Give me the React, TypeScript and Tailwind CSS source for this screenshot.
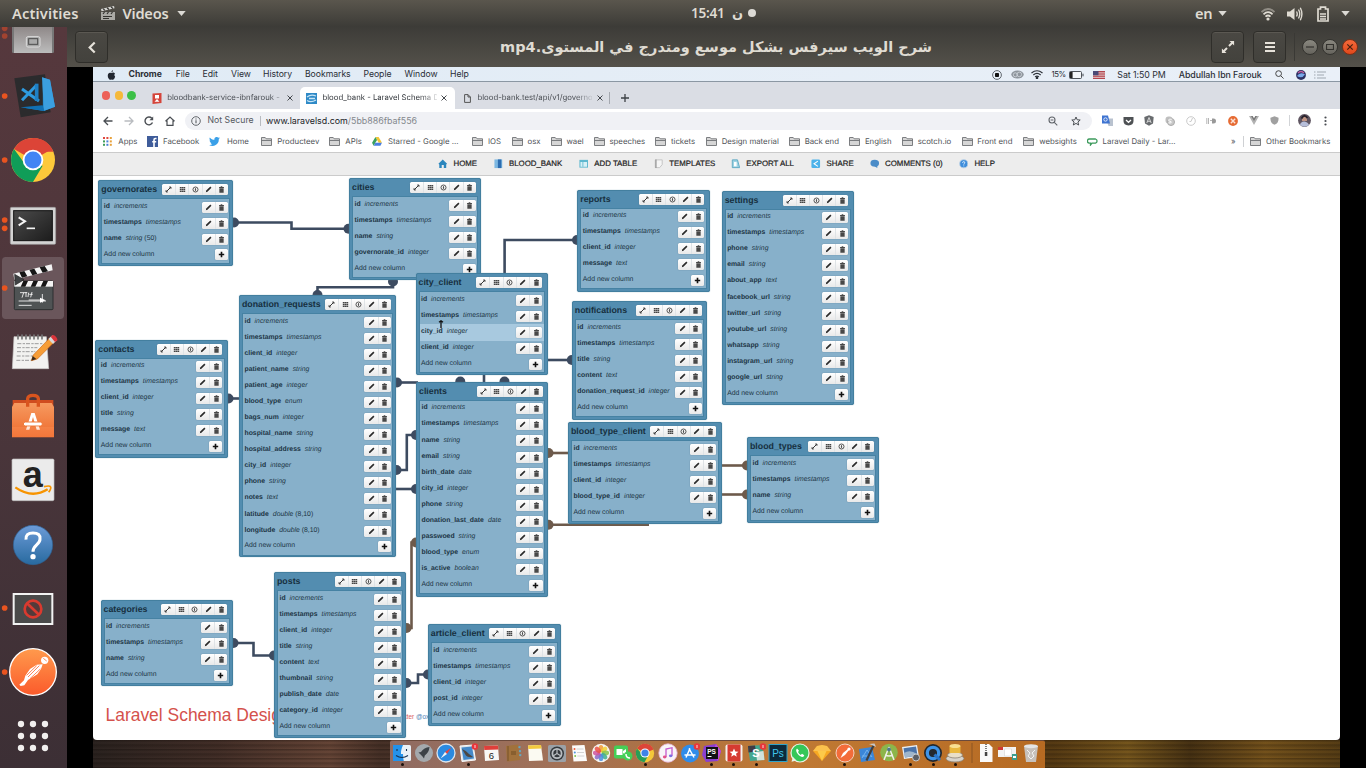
import React from "react";

type Column = [string, string];
type Table = { name: string; x: number; y: number; w: number; h: number; cols: Column[]; active?: number };

const ID: Column = ["id", "increments"];
const TS: Column = ["timestamps", "timestamps"];

const TABLES: Table[] = [
  { name: "governorates", x: 98.3, y: 180, w: 135.2, h: 86, cols: [ID, TS, ["name", "string (50)"]] },
  { name: "cities", x: 349, y: 178, w: 132.3, h: 102, cols: [ID, TS, ["name", "string"], ["governorate_id", "integer"]] },
  { name: "reports", x: 577.3, y: 189.5, w: 132.7, h: 102, cols: [ID, TS, ["client_id", "integer"], ["message", "text"]] },
  {
    name: "settings", x: 721.7, y: 190.5, w: 132.3, h: 214.5,
    cols: [ID, TS, ["phone", "string"], ["email", "string"], ["about_app", "text"], ["facebook_url", "string"], ["twitter_url", "string"], ["youtube_url", "string"], ["whatsapp", "string"], ["instagram_url", "string"], ["google_url", "string"]],
  },
  { name: "contacts", x: 95.3, y: 339.5, w: 132.7, h: 118.3, cols: [ID, TS, ["client_id", "integer"], ["title", "string"], ["message", "text"]] },
  {
    name: "donation_requests", x: 239, y: 295, w: 157.3, h: 262.2,
    cols: [ID, TS, ["client_id", "integer"], ["patient_name", "string"], ["patient_age", "integer"], ["blood_type", "enum"], ["bags_num", "integer"], ["hospital_name", "string"], ["hospital_address", "string"], ["city_id", "integer"], ["phone", "string"], ["notes", "text"], ["latitude", "double (8,10)"], ["longitude", "double (8,10)"]],
  },
  { name: "city_client", x: 415.5, y: 273.3, w: 132.2, h: 101.7, active: 2, cols: [ID, TS, ["city_id", "integer"], ["client_id", "integer"]] },
  {
    name: "clients", x: 416, y: 381.8, w: 132, h: 214.8,
    cols: [ID, TS, ["name", "string"], ["email", "string"], ["birth_date", "date"], ["city_id", "integer"], ["phone", "string"], ["donation_last_date", "date"], ["passwoed", "string"], ["blood_type", "enum"], ["is_active", "boolean"]],
  },
  { name: "notifications", x: 571.8, y: 301, w: 135.5, h: 118.5, cols: [ID, TS, ["title", "string"], ["content", "text"], ["donation_request_id", "integer"]] },
  { name: "blood_type_client", x: 568, y: 422.2, w: 153.7, h: 102.3, cols: [ID, TS, ["client_id", "integer"], ["blood_type_id", "integer"]] },
  { name: "blood_types", x: 747, y: 437.2, w: 132.3, h: 86.2, cols: [ID, TS, ["name", "string"]] },
  { name: "categories", x: 100.5, y: 600.3, w: 132.3, h: 85.7, cols: [ID, TS, ["name", "string"]] },
  {
    name: "posts", x: 274, y: 572.3, w: 132, h: 166.2,
    cols: [ID, TS, ["client_id", "integer"], ["title", "string"], ["content", "text"], ["thumbnail", "string"], ["publish_date", "date"], ["category_id", "integer"]],
  },
  { name: "article_client", x: 427.8, y: 624.2, w: 133, h: 101.8, cols: [ID, TS, ["client_id", "integer"], ["post_id", "integer"]] },
];

const NAVY = "#3d4b60";
const BROWN = "#6d5a4b";

const LINKS: { color: string; d: string; dots: [number, number][] }[] = [
  { color: NAVY, d: "M235 222.5H291.5V228.8H349", dots: [[234, 222.5], [348.5, 228.8]] },
  { color: NAVY, d: "M393 282V287.2H317.5V295", dots: [[393, 281.5], [317.5, 295]] },
  { color: NAVY, d: "M504.6 274V240H577", dots: [[577, 240]] },
  { color: NAVY, d: "M547 360H572", dots: [[571.8, 360]] },
  { color: NAVY, d: "M484 374V383", dots: [[460.3, 381.5], [504.5, 381.5]] },
  { color: NAVY, d: "M396 382.5H418", dots: [[397, 382.5]] },
  { color: NAVY, d: "M397 470H406.8V435H417", dots: [[396.500, 470], [416, 435]] },
  { color: NAVY, d: "M396 489H417", dots: [[416, 489]] },
  { color: NAVY, d: "M228 398.5H240", dots: [[228.5, 398.5]] },
  { color: NAVY, d: "M233 643H253.5V655.5H274", dots: [[233.500, 643], [274, 655.5]] },
  { color: NAVY, d: "M406 683H418V674.5H428", dots: [[406.5, 683], [428, 674.5]] },
  { color: BROWN, d: "M417 542.5H411.5V628H406", dots: [[416, 542.5], [406.5, 628]] },
  { color: BROWN, d: "M548 453H568", dots: [[548.5, 453]] },
  { color: BROWN, d: "M548 524.7H649", dots: [[548.5, 524.7]] },
  { color: BROWN, d: "M721 465.5H747", dots: [[747, 465.5]] },
  { color: BROWN, d: "M721 494.5H747", dots: [[747, 494.5]] },
];

const GLYPHS: Record<string, React.ReactNode> = {
  expand: <path d="M2.6 7.4 7.4 2.6M5.8 2.3h1.900v1.900M2.300 5.8v1.900h1.900" fill="none" stroke="#333" strokeWidth="1.1" />,
  grid: <path d="M2 2.900h6M2 5h6M2 7.1h6" stroke="#444" strokeWidth="1.4" strokeDasharray="1.8 .3" />,
  clock: <g fill="none" stroke="#444"><circle cx="5" cy="5" r="2.8" strokeWidth="1" /><path d="M5 3.4v3.2M4.3 5.2h1.4" strokeWidth=".9" /></g>,
  pencil: <path d="M2 8l.5-1.8L7 1.7 8.3 3 3.8 7.5z" fill="#2b2b2b" />,
  trash: <path d="M2.300 2.100h1.800v-.7h1.800v.7h1.800v1.200h-5.400zM2.600 3.700h4.800v5H2.600z" fill="#484848" />,
  plus: <path d="M5 2v6M2 5h6" stroke="#111" strokeWidth="1.8" />,
};

function Buttons({ names }: { names: string[] }) {
  return (
    <div className="flex h-[11px] shrink-0 overflow-hidden rounded-[1.5px] bg-gradient-to-b from-white to-[#e9e9e9] shadow-[0_0_1px_#45697f]">
      {names.map((n, i) => (
        <span key={n} className={"flex w-[13.2px] items-center justify-center " + (i ? "border-l border-[#dfe3e6]" : "")}>
          <svg viewBox="0 0 10 10" className="h-[9px] w-[9px]">{GLYPHS[n]}</svg>
        </span>
      ))}
    </div>
  );
}

function TableCard({ t }: { t: Table }) {
  return (
    <section
      className="absolute flex flex-col rounded-[2px] border border-[#437f9f] bg-[#538db0] px-[2px] pb-[2.5px] font-['Liberation_Sans',sans-serif] shadow-[0_0_1px_#5b8aa5] [text-rendering:geometricPrecision]"
      style={{ left: t.x - 93, top: t.y - 176, width: t.w, height: t.h }}
    >
      <header className="flex h-[17px] shrink-0 items-center justify-between pr-[2.500px]">
        <h2 className="text-[8.8px] leading-none font-bold text-[#17303f]">{t.name}</h2>
        <Buttons names={["expand", "grid", "clock", "pencil", "trash"]} />
      </header>
      <div className="flex grow flex-col border border-[#4682a3] bg-[#87b0ca] text-[6.85px] leading-none text-[#1c3444]">
        {t.cols.map(([n, ty], i) => (
          <div key={i} className={"flex h-[16.08px] shrink-0 items-center justify-between pr-[1.500px] pl-[1.5px] " + (i === t.active ? "bg-[#a8c9df]" : "")}>
            <span className="whitespace-nowrap">
              <b>{n}</b>
              <i className="ml-[4px]">{ty.split(" (")[0]}</i>
              {ty.includes("(") && <span> ({ty.split(" (")[1]}</span>}
            </span>
            <Buttons names={["pencil", "trash"]} />
          </div>
        ))}
        <div className="flex h-[15.5px] shrink-0 items-center justify-between pr-[1.500px] pl-[1.5px]">
          <span>Add new column</span>
          <Buttons names={["plus"]} />
        </div>
      </div>
    </section>
  );
}

/* ---------- launcher ---------- */

const LAUNCHER: { art: React.ReactNode; dots?: number[] }[] = [
  {
    dots: [82, 105],
    art: (
      <g>
        <rect x="36" y="20" width="126" height="136" rx="4" fill="#777" />
        <rect x="42" y="20" width="114" height="136" fill="url(#filesG)" />
        <rect x="79" y="107" width="41" height="31" rx="5" fill="#a5a5a5" stroke="#ddd" strokeWidth="3" />
        <rect x="86" y="113" width="27" height="17" fill="#aaa" stroke="#4d4d4d" strokeWidth="3" />
      </g>
    ),
  },
  {
    dots: [93],
    art: (
      <g>
        <path d="M43 40 135 28 152 142 62 157z" fill="#2b2b2d" />
        <path d="M62 127 128 131 126 37 150 45 165 125 132 138z" fill="#2489ca" />
        <path d="M110 50 118 48 120 128 110 126z" fill="#2b2b2d" />
        <path d="M118 40 128 37V130L118 126z" fill="#2b2b2d" />
        <path d="M126 37 150 44 165 125 132 137z" fill="#3b9fe0" />
        <path d="M62 127 128 121 133 138z" fill="#1070b3" />
        <path d="M66 72 117 108M66 106 108 62" stroke="#2e9be0" strokeWidth="9" />
        <path d="M110 56V108" stroke="#1f80c4" strokeWidth="11" />
      </g>
    ),
  },
  {
    dots: [93],
    art: (
      <g>
        <circle cx="99" cy="93" r="66" fill="#fdc93a" />
        <path d="M99 93 41.8 60A66 66 0 0 1 156.200 60z" fill="#dc4437" />
        <path d="M99 27A66 66 0 0 1 160 68H99z" fill="#dc4437" />
        <path d="M42 60A66 66 0 0 0 99 159L128 110 75 105z" fill="#109d58" />
        <circle cx="99" cy="93" r="31" fill="#fff" />
        <circle cx="99" cy="93" r="25.500" fill="#4285f4" />
      </g>
    ),
  },
  {
    dots: [81, 106],
    art: (
      <g>
        <rect x="31" y="43" width="136" height="111" rx="4" fill="#d3d3d3" stroke="#9c9c9c" strokeWidth="2" />
        <rect x="41" y="53" width="116" height="90" fill="url(#termG)" stroke="#111" strokeWidth="3" />
        <path d="M56 73 75 85 56 97" fill="none" stroke="#f4f4f4" strokeWidth="6" />
        <path d="M80 106H105" stroke="#f4f4f4" strokeWidth="5" />
      </g>
    ),
  },
  {
    dots: [93],
    art: (
      <g>
        <rect x="6" y="0" width="186" height="186" rx="11" fill="#6a565b" />
        <rect x="43" y="72" width="116" height="86" rx="3" fill="#4f5354" stroke="#2c2f30" strokeWidth="3" />
        <rect x="43" y="72" width="116" height="17" fill="#f3f3f3" />
        <path d="M62 89 70 72H84L76 89zM92 89 100 72H114L106 89zM122 89 130 72H144L136 89z" fill="#161616" />
        <path d="M40 50 155 22 158 40 43 68z" fill="#f3f3f3" />
        <path d="M58 46 73 42 82 58 66 62zM88 38 103 35 112 51 97 55zM119 31 134 27 144 43 128 47z" fill="#161616" />
        <path d="M44 52 72 68 46 84z" fill="#3f4244" stroke="#222" strokeWidth="2" />
        <path d="M60 107H82M71 107 66 122M78 105V120M86 107 84 120M96 105 92 121M88 112H98M56 132H138M56 145H95M86 129H120M127 111V137" stroke="#fff" strokeWidth="2.500" />
        <path d="M120 122 137 130 120 137z" fill="#fff" />
      </g>
    ),
  },
  {
    art: (
      <g>
        <path d="M42 47H139L146 143H37z" fill="#f2f2f0" stroke="#c7c7c5" strokeWidth="2" />
        <path d="M54 42v12M66 42v12M78 42v12M90 42v12M102 42v12M114 42v12M126 42v12" stroke="#777" strokeWidth="5" strokeLinecap="round" />
        <path d="M52 68H130M51 80H112M51 92H106M50 105H100M49 118H92" stroke="#8a8a8a" strokeWidth="2.500" strokeDasharray="12 4 7 3" />
        <path d="M94 119 100 102 150 50 163 63 112 114z" fill="#f69d37" stroke="#cf6a14" strokeWidth="2" />
        <path d="M94 119 98 105 109 114z" fill="#3b2b1e" />
        <path d="M145 54 157 43 171 57 159 69z" fill="#d9d9d9" />
        <path d="M152 47 158 42Q165 41 170 50T169 60L165 63z" fill="#d9343a" />
      </g>
    ),
  },
  {
    art: (
      <g>
        <path d="M38 45H160V68H38z" fill="#cf4c1f" />
        <path d="M43 54H155L162 66V157H36V66z" fill="url(#bagG)" />
        <path d="M83 65V41Q84 31 99 31T115 41V65" fill="none" stroke="#d9541e" strokeWidth="10" />
        <path d="M78 134 94 84H104L120 134H110L99 96 88 134z" fill="#fff" />
        <rect x="70" y="111" width="57" height="12" rx="6" fill="#fff" stroke="#ef7a3a" strokeWidth="3" />
        <path d="M36 126H162V157H36z" fill="#ff9c63" opacity=".25" />
      </g>
    ),
  },
  {
    art: (
      <g>
        <rect x="36" y="30" width="126" height="125" rx="4" fill="#ebebeb" stroke="#bdbdbd" strokeWidth="2" />
        <text x="98" y="115" textAnchor="middle" fontSize="108" fontWeight="700" className="font-['Liberation_Sans',sans-serif]" fill="#222">a</text>
        <path d="M46 115Q96 150 143 121" fill="none" stroke="#f79400" strokeWidth="7" />
        <path d="M132 113Q150 109 152 114T146 130" fill="none" stroke="#f79400" strokeWidth="5" />
      </g>
    ),
  },
  {
    art: (
      <g>
        <circle cx="99" cy="96" r="59" fill="url(#helpG)" stroke="#2d6296" strokeWidth="2" />
        <path d="M78 80Q76 60 99 60T120 78C121 94 99 96 99 116" fill="none" stroke="#fff" strokeWidth="9" />
        <circle cx="99" cy="131" r="8" fill="#fff" />
      </g>
    ),
  },
  {
    dots: [93],
    art: (
      <g>
        <rect x="41" y="51" width="116" height="90" fill="#4a4a4a" stroke="#f3f3f3" strokeWidth="6" />
        <circle cx="99" cy="96" r="25" fill="#5c2a2a" fillOpacity=".5" stroke="#d93a2f" strokeWidth="8" />
        <path d="M81 79 117 113" stroke="#d93a2f" strokeWidth="8" />
      </g>
    ),
  },
  {
    dots: [93],
    art: (
      <g>
        <circle cx="99" cy="93" r="70" fill="url(#postG)" stroke="#fff" strokeWidth="4" />
        <circle cx="134" cy="58" r="11" fill="#fff" />
        <path d="M128 70 110 71 90 84 76 104 72 118 58 131 62 135 73 133 84 117 112 100 123 84z" fill="#fff" />
        <path d="M118 74 84 108M110 74 80 103M121 84 90 113M130 52 140 60" stroke="#ff6c37" strokeWidth="2.500" />
      </g>
    ),
  },
  {
    art: (
      <g fill="#f1efee">
        {[57, 93, 129].map((y) => [63, 99, 135].map((x) => <circle key={x + "-" + y} cx={x} cy={y} r="9.500" />))}
      </g>
    ),
  },
];

function Launcher() {
  return (
    <aside className="w-[67px] shrink-0 overflow-hidden bg-gradient-to-b from-[#56383d] via-[#4b363b] to-[#3c2f35]">
      <svg className="absolute h-0 w-0">
        <defs>
          <linearGradient id="filesG" x2="0" y2="1"><stop stopColor="#6d6262" /><stop offset="1" stopColor="#bcbcbc" /></linearGradient>
          <linearGradient id="termG" x2="1" y2="1"><stop stopColor="#4b4b4b" /><stop offset="1" stopColor="#1c1c1c" /></linearGradient>
          <linearGradient id="bagG" x2="0" y2="1"><stop stopColor="#f69a60" /><stop offset="1" stopColor="#ee6a2c" /></linearGradient>
          <linearGradient id="helpG" x2="0" y2="1"><stop stopColor="#6c9bd8" /><stop offset="1" stopColor="#286a9f" /></linearGradient>
          <linearGradient id="postG" x2="0" y2="1"><stop stopColor="#ff9a4d" /><stop offset="1" stopColor="#fb5a2b" /></linearGradient>
        </defs>
      </svg>
      <div className="-mt-[26px] flex flex-col">
        {LAUNCHER.map((l, i) => (
          <svg key={i} viewBox="0 0 201 192" className="h-[64px] w-[67px] shrink-0">
            {l.art}
            {l.dots?.map((y) => <circle key={y} cx="14" cy={y} r="8.500" fill={i ? "#e95420" : "#a24330"} />)}
          </svg>
        ))}
      </div>
    </aside>
  );
}

/* ---------- desktop bars ---------- */

const Caret = () => <svg viewBox="0 0 10 6" className="h-[5px] w-[9px]"><path d="M0 0h10L5 6z" fill="#dcdad5" /></svg>;

function TopBar() {
  return (
    <div className="flex h-[27px] shrink-0 items-center bg-gradient-to-b from-[#5a564d] to-[#3c3b37] font-['Noto_Sans',sans-serif] text-[14.600px] font-semibold text-[#dfdbd2]">
      <div className="flex w-[683px] items-center">
        <span className="w-[88px] pl-[12px] tracking-[0.150px]">Activities</span>
        <svg viewBox="0 0 16 16" className="ml-[12px] h-[16px] w-[16px]">
          <path d="M1 7h14v8H1z" fill="#aaa9a4" /><path d="M1 4 14 1l.5 2.300L1.500 6.300z" fill="#d9d9d6" />
          <path d="M3 3.600 5 5.400M7 2.700 9 4.500M11 1.800 13 3.600M3 9 4.500 7M7 9 8.500 7M11 9 12.500 7M3 11.500h9M3 13.500h6" stroke="#34332f" strokeWidth="1.200" />
        </svg>
        <span className="ml-[6.500px] w-[54.500px] tracking-[-0.200px]">Videos</span>
        <Caret />
      </div>
      <div className="flex w-[512px] items-center pl-[8px]" dir="ltr">
        <span className="w-[35px] text-[13.600px] tracking-[-0.300px]">15:41</span>
        <span className="ml-[6px] w-[11px] text-center font-['DejaVu_Sans',sans-serif] text-[13px] font-bold">ن</span>
        <span className="ml-[5px] h-[8px] w-[8px] rounded-full bg-[#dcdad5]" />
      </div>
      <span className="w-[23px] tracking-[-0.200px]">en</span>
      <Caret />
      <svg viewBox="0 0 14 14" className="ml-[34px] h-[14px] w-[14px]" fill="none" stroke="#dfdbd2" strokeWidth="1.800">
        <path d="M.5 5Q7-1 13.500 5" opacity=".45" /><path d="M2.500 7.300Q7 3 11.500 7.300M4.500 9.600Q7 7.400 9.500 9.600" /><circle cx="7" cy="12" r="1.600" fill="#dfdbd2" stroke="none" />
      </svg>
      <svg viewBox="0 0 16 14" className="ml-[12px] h-[14px] w-[16px]">
        <path d="M0 4.500h3L7.500 1v12L3 9.500H0z" fill="#dfdbd2" /><path d="M9.500 4.500Q11 7 9.500 9.500M11.500 2.500Q14 7 11.500 11.500M13.300.8Q16.500 7 13.300 13.200" fill="none" stroke="#dfdbd2" strokeWidth="1.400" />
      </svg>
      <svg viewBox="0 0 12 16" className="ml-[14px] h-[16px] w-[12px]">
        <path d="M1 3h2.500V1.200h5V3H11v12H1z" fill="none" stroke="#dfdbd2" strokeWidth="1.700" /><path d="M3 8h6M3 10.500h6M3 13h6" stroke="#dfdbd2" strokeWidth="1.500" />
      </svg>
      <span className="ml-[12px] flex"><Caret /></span>
    </div>
  );
}

const hbtn = "flex h-[32px] w-[33px] shrink-0 items-center justify-center rounded-[4px] border border-[#2f2e2a] bg-gradient-to-b from-[#4a4843] to-[#43423d] shadow-[inset_0_1px_0_#5b5852]";
const wbtn = "flex h-[16px] w-[16px] shrink-0 items-center justify-center rounded-full border border-[#34332f] bg-gradient-to-b from-[#8a8880] to-[#66645d]";

function WindowHeader() {
  return (
    <div className="flex h-[40px] shrink-0 items-center bg-gradient-to-b from-[#3d3c38] to-[#54514a]">
      <div className={"ml-[8px] " + hbtn}>
        <svg viewBox="0 0 12 14" className="h-[13px] w-[11px]"><path d="M9.500 1.500 4 7l5.500 5.500" fill="none" stroke="#e6e2da" strokeWidth="2.400" /></svg>
      </div>
      <h1 dir="rtl" className="ml-[385px] w-[446px] shrink-0 text-center font-['DejaVu_Sans',sans-serif] text-[14.500px] leading-none font-bold whitespace-nowrap text-[#dfdbd2]">
        شرح الويب سيرفس بشكل موسع ومتدرج في المستوى.mp4
      </h1>
      <div className={"ml-[272px] " + hbtn}>
        <svg viewBox="0 0 14 14" className="h-[14px] w-[14px]" stroke="#e6e2da" fill="none" strokeWidth="2"><path d="M8.500.9h4.600v4.600zM.9 8.500v4.600h4.600z" fill="#e6e2da" strokeWidth="0" /><path d="M8 6 11.500 2.500M6 8 2.500 11.500" /></svg>
      </div>
      <div className={"ml-[9px] " + hbtn}>
        <svg viewBox="0 0 10 10" className="h-[10px] w-[10px]"><path d="M0 1h10M0 5h10M0 9h10" stroke="#e6e2da" strokeWidth="1.900" /></svg>
      </div>
      <span className="mr-[7px] ml-[8px] h-[28px] w-px bg-[#3a3935]" />
      <div className="flex gap-[4px]">
        <span className={wbtn}><svg viewBox="0 0 8 8" className="h-[8px] w-[8px]"><path d="M0 4h8" stroke="#33322e" strokeWidth="1.200" /></svg></span>
        <span className={wbtn}><svg viewBox="0 0 8 8" className="h-[8px] w-[8px]"><path d="M.5 1.500h7v5h-7z" fill="none" stroke="#33322e" strokeWidth="1.200" /></svg></span>
        <span className="flex h-[16px] w-[16px] items-center justify-center rounded-full border border-[#7a3018] bg-gradient-to-b from-[#f4693a] to-[#e0481a]"><svg viewBox="0 0 8 8" className="h-[8px] w-[8px]"><path d="M1.300 1.300l5.400 5.400M6.700 1.300 1.300 6.700" stroke="#45200f" strokeWidth="1.200" /></svg></span>
      </div>
    </div>
  );
}

/* ---------- recorded screen ---------- */

type Cell = { w: number; node: React.ReactNode };
const Cells = ({ items }: { items: Cell[] }) => (
  <>
    {items.map((c, i) => (
      <span key={i} className="flex shrink-0 items-center whitespace-nowrap" style={{ width: c.w }}>{c.node}</span>
    ))}
  </>
);

const MENU: [string, number][] = [["File", 26.8], ["Edit", 28.5], ["View", 32], ["History", 42], ["Bookmarks", 58.5], ["People", 41], ["Window", 45.5], ["Help", 547]];

function MenuBar() {
  return (
    <div className="flex h-[15px] shrink-0 items-center border-b border-[#8b97a3] bg-gradient-to-r from-[#e0ebf5] to-[#eaf0f8] pt-[1.200px] font-['Inter',sans-serif] text-[8.700px] tracking-[-0.050px] text-[#2a2e36]">
      <svg viewBox="0 0 10 12" className="ml-[13.500px] h-[10px] w-[9px]"><path d="M6.800 0Q6.900 2 4.900 2.900 4.700 1 6.800 0M5 3.600Q7.500 2.300 9.200 4.300 7.300 6 9.400 8.200 8.300 11.600 6.800 11.700T5 11.300Q3.500 12 2.800 11.600-.3 8.800.8 5 2.200 2.600 5 3.600" fill="#222831" /></svg>
      <b className="ml-[13px] w-[47.200px]">Chrome</b>
      <Cells items={MENU.map(([t, w]) => ({ w, node: t }))} />
      <div className="-ml-[5px] flex items-center">
        <Cells
          items={[
            { w: 19, node: <svg viewBox="0 0 10 10" className="h-[10px] w-[10px]"><circle cx="5" cy="5" r="4.400" fill="none" stroke="#555a61" strokeWidth=".9" /><rect x="3" y="3" width="4" height="4" rx=".8" fill="#111" /></svg> },
            { w: 20, node: <svg viewBox="0 0 13 9" className="h-[9px] w-[13px]"><ellipse cx="6.500" cy="4.500" rx="6.200" ry="4" fill="#8e959d" /><circle cx="4.300" cy="4.800" r="2" fill="none" stroke="#d3d9e0" strokeWidth=".8" /><circle cx="8.300" cy="4.400" r="2.300" fill="none" stroke="#d3d9e0" strokeWidth=".8" /></svg> },
            { w: 20.500, node: <svg viewBox="0 0 12 9" className="h-[9px] w-[12px]" fill="none" stroke="#2d3138" strokeWidth="1.200"><path d="M.5 3Q6-1.500 11.500 3M2.300 5Q6 1.800 9.700 5M4.100 6.900Q6 5.200 7.900 6.900" /><circle cx="6" cy="8" r=".7" fill="#2d3138" /></svg> },
            { w: 17.500, node: <span className="text-[7.800px] tracking-[-0.400px]">15%</span> },
            { w: 24.500, node: <svg viewBox="0 0 15 8" className="h-[8px] w-[15px]"><rect x=".5" y=".5" width="12" height="7" rx="1" fill="#f2f5f8" stroke="#3b4047" strokeWidth=".9" /><path d="M1 1h2.600v6H1z" fill="#222" /><path d="M14 2.700v2.600" stroke="#3b4047" /></svg> },
            { w: 23.800, node: <svg viewBox="0 0 12 8" className="h-[8px] w-[12px]"><path d="M0 0h12v8H0z" fill="#d9b3b6" /><path d="M0 .6h12M0 3h12M0 5.300h12M0 7.500h12" stroke="#b4464f" strokeWidth="1.100" /><path d="M0 0h5.500v4.300H0z" fill="#4a4a77" /></svg> },
            { w: 61.500, node: <span className="text-[8.800px]">Sat 1:50 PM</span> },
            { w: 96, node: <span className="text-[8.800px] font-medium">Abdullah Ibn Farouk</span> },
            { w: 21, node: <svg viewBox="0 0 10 10" className="h-[9px] w-[9px]" fill="none" stroke="#444" strokeWidth="1.100"><circle cx="4" cy="4" r="3.200" /><path d="m6.500 6.500 3 3" /></svg> },
            { w: 18.500, node: <svg viewBox="0 0 10 10" className="h-[10px] w-[10px]"><circle cx="5" cy="5" r="4.900" fill="#2d3163" /><path d="M1 6Q4 1.500 9 4.500 6 9 1 6" fill="#79a9ea" /><path d="M2 3Q5 0 8 3" stroke="#c25c9d" strokeWidth="1.300" fill="none" /></svg> },
            { w: 15, node: <svg viewBox="0 0 12 8" className="h-[8px] w-[12px]"><path d="M0 1h1.500M0 4h1.500M0 7h1.500M3 1h9M3 4h7M3 7h9" stroke="#a0a8b1" strokeWidth="1" /></svg> },
          ]}
        />
      </div>
    </div>
  );
}

const Close = ({ className }: { className: string }) => (
  <svg viewBox="0 0 6 6" className={"h-[6px] w-[6px] shrink-0 " + className}><path d="M.5.5l5 5M5.500.5l-5 5" stroke="#44484d" strokeWidth="1" /></svg>
);

function TabStrip() {
  return (
    <div className="flex h-[27px] shrink-0 items-end bg-[#dadde4] font-['Inter',sans-serif] text-[7.750px] text-[#4b4f55] [text-rendering:geometricPrecision]">
      <div className="flex h-[22px] w-[207px] items-center">
        <span className="ml-[8.500px] -mt-[5px] h-[8.500px] w-[8.500px] rounded-full bg-[#ec6058]" />
        <span className="ml-[4.500px] -mt-[5px] h-[8.500px] w-[8.500px] rounded-full bg-[#f5b93a]" />
        <span className="ml-[4.200px] -mt-[5px] h-[8.500px] w-[8.500px] rounded-full bg-[#3cc047]" />
        <svg viewBox="0 0 10 11" className="ml-[16px] h-[11px] w-[10px]"><path d="M.5.500 9.500 0v10L.5 11z" fill="#d5443a" /><path d="M3 2h4v3.500H3zM2.500 8.800 5 6l2.500 2.800z" fill="#fff" /></svg>
        <span className="ml-[5.500px] w-[114px] whitespace-nowrap [mask-image:linear-gradient(90deg,#000_90%,rgba(0,0,0,.35))]">bloodbank-service-ibnfarouk -</span>
        <Close className="ml-[5.500px]" />
      </div>
      <div className="flex h-[22px] w-[155px] items-center rounded-t-[5px] bg-white pl-[6px] text-[#33373c]">
        <svg viewBox="0 0 11 11" className="h-[11px] w-[11px]"><path d="M0 0h11v11H0z" fill="#2f8ac7" /><path d="M1 4Q5 1 10 3M1 7.500Q5 10 10 7M3 5.500h6" stroke="#c8e5f6" strokeWidth="1.300" fill="none" /></svg>
        <span className="ml-[5.500px] w-[114px] whitespace-nowrap [mask-image:linear-gradient(90deg,#000_85%,rgba(0,0,0,.15))]">blood_bank - Laravel Schema D</span>
        <Close className="ml-[4.500px]" />
      </div>
      <div className="flex h-[22px] items-center">
        <svg viewBox="0 0 7 9" className="ml-[8.500px] h-[9px] w-[7px]"><path d="M.6.6h3.400L6.400 3v5.400H.6zM4 .6V3h2.400" fill="none" stroke="#555" strokeWidth="1" /></svg>
        <span className="ml-[7px] w-[114px] whitespace-nowrap [mask-image:linear-gradient(90deg,#000_85%,rgba(0,0,0,.15))]">blood-bank.test/api/v1/governo</span>
        <Close className="ml-[5px]" />
        <span className="ml-[6.500px] h-[12px] w-px bg-[#a5a9b0]" />
        <svg viewBox="0 0 8 8" className="ml-[10.500px] h-[8px] w-[8px]"><path d="M4 0v8M0 4h8" stroke="#3d4146" strokeWidth="1.300" /></svg>
      </div>
    </div>
  );
}

const g = "h-[10px] w-[10px] shrink-0";
function AddressBar() {
  return (
    <div className="flex h-[22px] shrink-0 items-center bg-white pt-px font-['Inter',sans-serif] text-[8.700px] text-[#55595f]">
      <svg viewBox="0 0 10 10" className={g + " ml-[10px]"} fill="none" stroke="#4a4e53" strokeWidth="1.300"><path d="M9.500 5H1M5 1 1 5l4 4" /></svg>
      <svg viewBox="0 0 10 10" className={g + " ml-[11px]"} fill="none" stroke="#b9bcc0" strokeWidth="1.300"><path d="M.5 5H9M5 1l4 4-4 4" /></svg>
      <svg viewBox="0 0 10 10" className={g + " ml-[10px]"} fill="none" stroke="#4a4e53" strokeWidth="1.400"><path d="M8.500 6.500A3.900 3.900 0 1 1 7.800 2.300" /><path d="M9.200.5v3.800H5.400z" fill="#4a4e53" stroke="none" /></svg>
      <svg viewBox="0 0 10 10" className={g + " ml-[11px]"} fill="none" stroke="#4a4e53" strokeWidth="1.200"><path d="M.5 5.300 5 1l4.500 4.300M2 4.500v4.900h6V4.500" /></svg>
      <div className="ml-[10px] flex h-[18px] w-[907px] items-center rounded-full bg-[#f0f1f5]">
        <svg viewBox="0 0 10 10" className={g + " ml-[6px]"} fill="none" stroke="#63676c"><circle cx="5" cy="5" r="4.300" /><path d="M5 4.300v3M5 2.500v1" strokeWidth="1.200" /></svg>
        <span className="ml-[6.500px] w-[52px] pt-px tracking-[0.020px]">Not Secure</span>
        <span className="h-[10px] w-px bg-[#b8bbc0]" />
        <span className="ml-[5.500px] w-[782px] pt-px text-[8.870px] text-[#83878c]"><span className="text-[#202327]">www.laravelsd.com</span>/5bb886fbaf556</span>
        <svg viewBox="0 0 10 10" className={g} fill="none" stroke="#60646a" strokeWidth="1.100"><circle cx="4" cy="4" r="3" /><path d="m6.300 6.300 3 3M2.600 4h2.800" /></svg>
        <svg viewBox="0 0 10 10" className={g + " ml-[12.500px]"} fill="none" stroke="#4a4e53" strokeWidth="1"><path d="m5 1 1.200 2.800 3 .2-2.300 2 .8 3L5 7.400 2.300 9l.8-3L.8 4l3-.2z" /></svg>
      </div>
      <div className="ml-[10px] flex items-center">
        <Cells
          items={[
            { w: 21, node: <svg viewBox="0 0 11 11" className="h-[11px] w-[11px]"><path d="M4 3.500h7V11H6.500z" fill="#b9c2cf" /><path d="M0 .5h6l2 8H0z" fill="#3f74d1" /><circle cx="3.500" cy="4.500" r="1.700" fill="none" stroke="#fff" strokeWidth=".8" /></svg> },
            { w: 21, node: <svg viewBox="0 0 11 10" className="h-[10px] w-[11px]"><path d="M.5 1h10v4q0 4-5 4.500Q.5 9 .5 5z" fill="#4e5154" /><path d="M3 4l2.500 2.300L8 4" fill="none" stroke="#fff" strokeWidth="1.300" /></svg> },
            { w: 21, node: <svg viewBox="0 0 10 11" className="h-[11px] w-[10px]"><path d="M5 .3 9.700 2 9 8.500 5 10.800 1 8.500.3 2z" fill="#686b6e" /><path d="M2.800 8 5 2.500 7.200 8M3.500 6.300h3" fill="none" stroke="#e1e1e1" strokeWidth=".9" /></svg> },
            { w: 21, node: <svg viewBox="0 0 10 10" className="h-[10px] w-[10px]"><rect x=".5" y=".5" width="7" height="7" rx="3" fill="#bfbfbf" /><circle cx="6" cy="6" r="3.500" fill="#c9c9c9" stroke="#aaa" /><path d="M6.800 3.200Q3.500 2.500 3.600 4T6 5.500Q7 7.500 3.500 6.800" fill="none" stroke="#fff" /></svg> },
            { w: 20, node: <svg viewBox="0 0 10 10" className="h-[10px] w-[10px]" fill="none" stroke="#cbcbcb"><circle cx="5" cy="5" r="4.300" /><path d="M6.500 2 5 5.500H3.500" /></svg> },
            { w: 21.500, node: <svg viewBox="0 0 10 8" className="h-[8px] w-[10px]"><path d="M.8 1v6M2.500 1v6M4 3.500h2" stroke="#b5b5b5" /><path d="M6 1.500h1.500a2.500 2.500 0 0 1 0 5H6z" fill="#999" /></svg> },
            { w: 21, node: <svg viewBox="0 0 10 10" className="h-[10px] w-[10px]"><circle cx="5" cy="5" r="4.900" fill="#e66b33" /><path d="m2.800 2.800 4.400 4.400M7.200 2.800 2.800 7.200" stroke="#fbe2d6" strokeWidth="1.400" /></svg> },
            { w: 21, node: <svg viewBox="0 0 10 9" className="h-[9px] w-[10px]"><path d="M0 0h3l2 3.500L7 0h3L5 9z" fill="#b2b2b2" /><path d="M2 0h1.700L5 2.200 6.300 0H8L5 5z" fill="#777" /></svg> },
            { w: 19.500, node: <svg viewBox="0 0 10 10" className="h-[9px] w-[9px]"><path d="M5 .3 9.500 2Q10 8 5 9.800 0 8 .5 2z" fill="#a0a0a0" /></svg> },
            { w: 9, node: <span className="h-[11px] w-px bg-[#d2d4d7]" /> },
            { w: 25.500, node: <svg viewBox="0 0 13 13" className="h-[13px] w-[13px]"><circle cx="6.500" cy="6.500" r="6.400" fill="#5f5561" /><path d="M4 4.500Q6.500 1 9 4.500V7H4z" fill="#c19584" /><path d="M2 11Q3 7 6.500 7.500T11 11Q6.500 14.500 2 11" fill="#b7bfda" /><path d="M3.500 4.500Q6.500-.5 9.500 4" stroke="#28222a" strokeWidth="1.800" fill="none" /></svg> },
            { w: 4, node: <svg viewBox="0 0 3 10" className="h-[10px] w-[3px]" fill="#4a4e53"><circle cx="1.500" cy="1.500" r="1.100" /><circle cx="1.500" cy="5" r="1.100" /><circle cx="1.500" cy="8.500" r="1.100" /></svg> },
          ]}
        />
      </div>
    </div>
  );
}

const Folder = () => (
  <svg viewBox="0 0 11 9" className="h-[9px] w-[11px]" fill="#d6d6d6" stroke="#6f7275" strokeWidth=".9"><path d="M.5 8.500v-8h3.700l1 1.300h5.300v6.700z" /><path d="M.5 3.500h10" /></svg>
);

const APPS = <svg viewBox="0 0 9 9" className="h-[9px] w-[9px]">{["#e0483e", "#e0483e", "#e8a13a", "#3f9d58", "#4a7fd8", "#e8a13a", "#3f9d58", "#4a7fd8", "#e8a13a"].map((c, i) => <rect key={i} x={(i % 3) * 3.400} y={Math.floor(i / 3) * 3.400} width="2" height="2" fill={c} />)}</svg>;
const FB = <svg viewBox="0 0 11 11" className="h-[11px] w-[11px]"><path d="M0 0h11v11H0z" fill="#3f5c9a" /><path d="M9.500 2.500H8.300Q7 2.500 7 4v7M5.200 5.800h4" stroke="#fff" strokeWidth="1.600" fill="none" /></svg>;
const TW = <svg viewBox="0 0 24 20" className="h-[9px] w-[11px]"><path d="M24 2.400c-.9.400-1.800.7-2.800.8 1-.6 1.800-1.600 2.200-2.700-1 .6-2 1-3.100 1.200a4.900 4.900 0 0 0-8.400 4.500C7.700 6 4.100 4 1.700 1A4.900 4.900 0 0 0 3.200 7.600c-.8 0-1.600-.2-2.200-.6 0 2.400 1.600 4.400 3.900 4.900-.7.200-1.500.2-2.200.1.600 2 2.400 3.400 4.600 3.400A9.900 9.900 0 0 1 0 17.500 14 14 0 0 0 21.500 5z" fill="#3aa0e8" /></svg>;
const DRIVE = <svg viewBox="0 0 11 10" className="h-[9px] w-[10px]"><path d="M3.800 0h3.500l3.700 6.400H7.400z" fill="#f3c536" /><path d="M3.800 0 5.500 3.200 1.800 9.600 0 6.400z" fill="#3aa05c" /><path d="M3.700 6.400H11L9.300 9.600H1.800z" fill="#4a7fe0" /></svg>;
const CHAT = <svg viewBox="0 0 11 8" className="h-[8px] w-[11px]"><path d="M2.500 1h6a2.200 2.200 0 0 1 0 4.200H5L3.500 7V5.200h-1a2.100 2.100 0 0 1 0-4.200z" fill="none" stroke="#3c9a5c" strokeWidth="1.300" /></svg>;

const MARKS: [string, number, number, React.ReactNode?][] = [
  ["Apps", 44.300, 15.300, APPS], ["Facebook", 61.700, 15.700, FB], ["Home", 52.300, 18, TW], ["Producteev", 68, 16], ["APIs", 43.200, 16], ["Starred - Google ...", 99.500, 15.500, DRIVE],
  ["IOS", 40, 16], ["osx", 39, 15.500], ["wael", 43, 15.500], ["speeches", 61.300, 15.500], ["tickets", 50.700, 15.700], ["Design material", 83, 15.700], ["Back end", 60.300, 15.700], ["English", 52.700, 15.700],
  ["scotch.io", 59.700, 15.700], ["Front end", 61.300, 15.700], ["websights", 64, 16.300], ["Laravel Daily - Lar...", 144, 15.700, CHAT],
];

function Bookmarks() {
  return (
    <div className="flex h-[21px] shrink-0 items-center bg-white pt-[0.500px] pl-[10px] font-['Inter',sans-serif] text-[7.800px] text-[#4f5358] [text-rendering:geometricPrecision]">
      <Cells items={MARKS.map(([t, w, ic, icon]) => ({ w, node: <><span className="flex shrink-0" style={{ width: ic }}>{icon ?? <Folder />}</span>{t}</> }))} />
      <span className="w-[12px]">»</span>
      <span className="h-[11px] w-px bg-[#cfd1d4]" />
      <span className="ml-[6.500px] flex w-[15.700px]"><Folder /></span>
      <span className="whitespace-nowrap">Other Bookmarks</span>
    </div>
  );
}

const NAV: [string, number, React.ReactNode][] = [
  ["HOME", 55.500, <path key="p" d="M0 5 5 0l5 5-1 .8V10H6.200V6.500H3.800V10H1V5.800z" fill="#2b86bd" />],
  ["BLOOD_BANK", 85.300, <g key="p"><path d="M0 0h9v10H0z" fill="#7db8e2" /><path d="M4 0h4v10H4z" fill="#2d6db0" /></g>],
  ["ADD TABLE", 75, <g key="p"><path d="M0 .5h10v9H0z" fill="#5fb8cf" /><path d="M1.200 3h7.600v5.500H1.200z" fill="#d8f0f6" /><path d="M4 3v5.500" stroke="#5fb8cf" /></g>],
  ["TEMPLATES", 77, <g key="p"><path d="M1 .5h8V6L6 9.500H1z" fill="#f5f5f5" stroke="#bfbfbf" /><path d="M1 0h1.500v10H1z" fill="#999" /></g>],
  ["EXPORT ALL", 80.300, <g key="p"><path d="M1 .5h6L9.500 9.500H1z" fill="#9fd4e4" stroke="#58a5bf" /><path d="M3 3h3v5H3z" fill="#fff" /></g>],
  ["SHARE", 58.500, <g key="p"><rect width="10" height="10" rx="1.500" fill="#4bb2ea" /><path d="M7.500 2 3 5l4.500 3" fill="none" stroke="#fff" strokeWidth="1.200" /></g>],
  ["COMMENTS (0)", 89.300, <g key="p"><ellipse cx="5" cy="4.300" rx="5" ry="3.900" fill="#4b8cc8" /><path d="M4 7.500h4V10z" fill="#4b8cc8" /></g>],
  ["HELP", 40, <g key="p"><circle cx="5" cy="5" r="4.700" fill="#3e8ddb" stroke="#b7cfe6" /><path d="M3.600 4Q3.700 2.500 5 2.500T6.300 4Q5 4.800 5 6M5 7v1" fill="none" stroke="#e6f3ff" /></g>],
];

function AppNav() {
  return (
    <nav className="flex h-[24px] shrink-0 items-center border-y border-[#cbcbcb] bg-[#ededed] pt-[0.500px] pl-[345px] font-['Liberation_Sans',sans-serif] text-[7.850px] text-[#222] [-webkit-text-stroke:0.2px_#222] [text-rendering:geometricPrecision]">
      <Cells items={NAV.map(([t, w, icon]) => ({ w, node: <><svg viewBox="-.5 -.5 11 11" className="mr-[6px] h-[9.500px] w-[9.500px]">{icon}</svg>{t}</> }))} />
    </nav>
  );
}

function Canvas() {
  return (
    <div className="shrink-0 bg-[#2a211e]">
      <main className="relative h-[564px] overflow-hidden rounded-b-[4px] bg-white">
        <div className="absolute top-[525.500px] left-[12.500px] font-['Liberation_Sans',sans-serif] text-[17.450px] whitespace-nowrap text-[#d4514c]">Laravel Schema Desig</div>
        <div className="absolute top-[536px] left-[312px] font-['Liberation_Sans',sans-serif] text-[6.400px] whitespace-nowrap text-[#d9635e]">tter <span className="text-[#4a7fb5]">@ox</span></div>
        <svg viewBox="93 176 1247 564" className="absolute inset-0 h-[564px] w-[1247px]">
          {LINKS.map((l, i) => (
            <g key={i}>
              <path d={l.d} fill="none" stroke={l.color} strokeWidth="2.600" />
              {l.dots.map(([x, y]) => <circle key={x + "," + y} cx={x} cy={y} r="5" fill={l.color} />)}
            </g>
          ))}
        </svg>
        {TABLES.map((t) => <TableCard key={t.name} t={t} />)}
        <svg viewBox="0 0 6 9" className="absolute top-[144px] left-[345px] h-[9px] w-[6px]"><path d="M1 2.200 3 .8 5 2.200M3 1v7" fill="none" stroke="#111" strokeWidth="1.300" /></svg>
      </main>
    </div>
  );
}

/* ---------- mac dock ---------- */

type DockIcon = { art: React.ReactNode; run?: boolean; w?: number };
const badge = <g><circle cx="17" cy="3.500" r="3.300" fill="#e8363b" /><path d="M17 2v3" stroke="#fff" strokeWidth=".8" /></g>;
const DOCK: DockIcon[] = [
  { run: true, art: <g><rect x="1" y="2" width="18" height="16" rx="1.500" fill="#e9f1f8" /><path d="M1 2h10Q8.500 8 9 11h2q0 4 .8 7H1z" fill="#2492ea" /><path d="M5 6v2M14.500 6v2M4 12.500q6 4 12 0" stroke="#15304e" strokeWidth="1.100" fill="none" /></g> },
  { art: <g><circle cx="10" cy="10" r="9" fill="#a4a9ad" /><path d="M15.500 4Q10 4.500 7 9l-2.500.5 1.300 1.300L8.500 13.500l1.500 2 .8-3Q15 9.500 15.500 4" fill="#3c4247" /></g> },
  { art: <g><circle cx="10" cy="10" r="9" fill="#2b8ae0" stroke="#dbe5ee" strokeWidth="1.300" /><path d="M15.500 4.500 11 11 9 9z" fill="#e8433c" /><path d="M4.500 15.500 9 9l2 2z" fill="#f4f4f4" /></g> },
  { run: true, art: <g><path d="M2 3l13-1 2.500 15L4 18.500z" fill="#dbe4ea" stroke="#f9f9f9" /><path d="M3.500 4.500 14 3.500 16 15.500 5.500 17z" fill="#4589c8" /><path d="M4 6q5 2 7 5l4 3q-6 1-8-3z" fill="#4c4742" />{badge}</g> },
  { art: <g><path d="M3 3l14-.5L18 17 4 18z" fill="#f8f8f6" /><path d="M3 3l14-.5.4 4L3.300 7z" fill="#df3f3a" /><text x="10.500" y="15.800" textAnchor="middle" fontSize="9.500" fill="#222" className="font-['Liberation_Sans',sans-serif]">6</text></g> },
  { art: <g><path d="M3 3l12-1.500L17 17 4 18.500z" fill="#a1723c" /><path d="M5 3v15" stroke="#77502a" /><path d="M15.500 4l2 .3M16 8l2 .3M16.300 12l2 .3" stroke="#63a9c1" strokeWidth="2" /><path d="M8 8h5v4H8z" fill="#885f2f" /></g> },
  { art: <g><path d="M3 2.500 16 2l2 15.500L4 18z" fill="#fbfaf2" /><path d="M3 2.500 16 2l.5 3.500L3.300 6z" fill="#f3c93d" /></g> },
  { art: <g><rect x="1" y="2" width="18" height="17" rx="1.500" fill="#9ba1a7" /><circle cx="10" cy="10.500" r="7" fill="#34383c" /><circle cx="10" cy="10.500" r="4.600" fill="none" stroke="#b9bdc1" strokeWidth="1.800" /><path d="M10 10.500V6M10 10.500l-4 2.500M10 10.500l4 2.500" stroke="#b9bdc1" strokeWidth="1.200" /></g> },
  { art: <g><path d="M3 2.500 15.500 2 18 18 4.500 18.500z" fill="#fbfbfa" /><path d="M7.500 6h7M8 9.500h7M8.300 13h7" stroke="#c9c9c9" strokeWidth=".8" /><circle cx="5.500" cy="6" r="1" fill="#ee5a3a" /><circle cx="5.800" cy="9.500" r="1" fill="#4b93e0" /><circle cx="6.200" cy="13" r="1" fill="#7dc34a" /></g> },
  { art: <g><circle cx="10" cy="10" r="9.200" fill="#f6f4f1" />{["#f39b32", "#f3d034", "#8ac44a", "#3faf8f", "#4a8fdd", "#8d68c9", "#d0559f", "#ea5046"].map((c, i) => <ellipse key={i} cx="10" cy="5.600" rx="2.400" ry="3.700" fill={c} opacity=".85" transform={`rotate(${i * 45} 10 10)`} />)}</g> },
  { art: <g><rect x="1" y="2.500" width="14" height="13" rx="2" fill="#45cf57" /><path d="M3.500 6h6v6h-6zM10 8l3-2v6l-3-2z" fill="#fff" /><circle cx="15" cy="13" r="4.500" fill="#45cf57" /><path d="M13 11q0 4 4 4" stroke="#fff" strokeWidth="1.500" fill="none" /></g> },
  { run: true, art: <g><circle cx="10" cy="10" r="9.200" fill="#f5c73a" /><path d="M10 10 2 5.500A9.200 9.200 0 0 1 18.500 6.500z" fill="#dc4539" /><path d="M2 5.500A9.200 9.200 0 0 0 9.500 19.200L13.500 12 7 11z" fill="#289e58" /><circle cx="10" cy="10" r="4.600" fill="#fff" /><circle cx="10" cy="10" r="3.600" fill="#4083e8" /></g> },
  { art: <g><circle cx="10" cy="10" r="9.200" fill="#f8f4f8" stroke="#e8b4d8" strokeWidth=".8" /><path d="M8 14V6l6-1.300v8" fill="none" stroke="#c35acd" strokeWidth="1.300" /><ellipse cx="6.700" cy="14" rx="1.800" ry="1.400" fill="#e1518b" /><ellipse cx="12.700" cy="12.800" rx="1.800" ry="1.400" fill="#7a6fe0" /></g> },
  { art: <g><circle cx="10" cy="10.500" r="9" fill="#2f8cea" /><path d="M10 5.500 6 14.500M9 5.500l5 9M4.500 12h11" stroke="#fff" strokeWidth="1.500" />{badge}</g> },
  { run: true, art: <g><path d="M2 3 14 1l5 7-3 10-12 1L0 12z" fill="#8a3fd0" /><path d="M14 1l5 7-3 10-6-8z" fill="#c24adf" /><rect x="4" y="4" width="12" height="12" fill="#121114" /><text x="9.500" y="10.500" textAnchor="middle" fontSize="6.500" fontWeight="700" fill="#fff" className="font-['Liberation_Sans',sans-serif]">PS</text><path d="M5.500 13.500h4" stroke="#fff" /></g> },
  { run: true, art: <g><rect x="1.500" y="1.500" width="17" height="17" rx="2" fill="#f3eee9" /><path d="M3.500 1.500h13v17h-13z" fill="#d63a31" /><path d="m10 5.500 1.300 3 3.200.2-2.500 2 .8 3.100L10 12.100l-2.800 1.700.8-3.100-2.500-2 3.200-.2z" fill="#fff" /></g> },
  { run: true, art: <g><path d="M2 3l14-1 2.500 15L4 18z" fill="#42a78f" /><path d="M2 3l7-.5 1 6-7.500 1z" fill="#3f3b46" /><path d="M10 9l7.500-1 1 9-7.500.5z" fill="#cfe3dc" /><text x="10" y="14" textAnchor="middle" fontSize="11" fontWeight="700" fill="#fff" className="font-['Liberation_Sans',sans-serif]">S</text>{badge}</g> },
  { art: <g><rect x="1" y="1.500" width="18" height="17" fill="#0c2a3b" stroke="#2fa3c9" /><text x="10" y="13.500" textAnchor="middle" fontSize="10" fill="#41c7ee" className="font-['Liberation_Sans',sans-serif]">Ps</text></g> },
  { art: <g><circle cx="10" cy="10" r="9" fill="#35c759" stroke="#e8f4e9" strokeWidth="1.200" /><path d="M1.500 18.800 3 14l3.500 3.500z" fill="#e8f4e9" /><path d="M7 5.500q-1.500 1-.5 3.500 2 4 5.500 5 2 .2 2.300-1.800L12 10.800l-1.200 1.200Q8.800 11 8 9L9 7.800z" fill="#fff" /></g> },
  { art: <g><path d="M5 3 10 2l5 1 4 5-9 10L1 8z" fill="#f7a822" /><path d="M5.500 8h9L10 18z" fill="#fcc94a" /><path d="M1 8h18L15 3 10 2 5 3z" fill="#fdd26b" opacity=".6" /></g> },
  { run: true, art: <g><circle cx="10" cy="10" r="9" fill="#f36c3a" stroke="#f5cfbd" strokeWidth="1" /><path d="M5.500 15 8 10l5-4 1 1-4 5z" fill="#fff" /><circle cx="14" cy="6" r="1.600" fill="#fff" /></g> },
  { art: <g><path d="M2 6 15 4l3 13L4 19z" fill="#3b86d8" /><path d="M5 15 10 7l5 7M5 13h9" stroke="#75b3ec" fill="none" /><path d="M8.500 17 15.500 2l2 1-7 15z" fill="#3d3f42" /><path d="M12 1l5.500-.5L19 4l-3-1.500z" fill="#c7c9cc" /></g> },
  { art: <g><circle cx="10" cy="9.500" r="8.800" fill="#8cb54b" /><path d="M10 4 5 17M10 4l5 13M6 12q4 2 8 0" stroke="#f0f0ea" strokeWidth="1.500" fill="none" /><circle cx="10" cy="6.500" r="2" fill="#4f7a8a" /></g> },
  { run: true, art: <g><path d="M1 4l15-2 2 12-15 2z" fill="#e8edf2" /><path d="M2.500 5.300 15 3.500l1.500 9L4 14.500z" fill="#4b73a8" /><path d="M3 10q6-4 13 1l.5 1.500L4 14.500z" fill="#9fb6cc" /><circle cx="15" cy="14.500" r="3.500" fill="#5b5f66" stroke="#c5c8cc" /></g> },
  { run: true, art: <g><circle cx="10" cy="10" r="9" fill="#23282f" /><circle cx="10" cy="10" r="5.700" fill="none" stroke="#3f94e8" strokeWidth="3.300" /><path d="m11.500 11.500 5.500 5.500" stroke="#2b75c9" strokeWidth="3" /></g> },
  { run: true, w: 26, art: <g><ellipse cx="10" cy="15.500" rx="9" ry="3.500" fill="#d8d4cc" stroke="#8b8274" strokeWidth=".8" /><ellipse cx="10" cy="12" rx="7.500" ry="3" fill="#e9dfc8" stroke="#8b8274" strokeWidth=".8" /><path d="M4.500 3h11v7h-11z" fill="#e9b73e" /><ellipse cx="10" cy="3" rx="5.500" ry="2" fill="#f9df91" /></g> },
  { w: 5, art: <path d="M1 0v20" stroke="#8b5422" strokeWidth="1" /> },
  { art: <g><path d="M4 1h9l3.500 3.500V19H4z" fill="#fafafa" /><path d="M10 1v8" stroke="#555" strokeWidth="1.500" strokeDasharray="1 1" /><path d="M8.800 9h2.500v4H8.800z" fill="#444" /></g> },
  { w: 22.800, art: <g><path d="M0 4h18v10H0z" fill="#f3f3f3" /><path d="M0 4h5v3H0z" fill="#cf3a35" /><path d="M6.500 6h7v7h-7z" fill="#fff" stroke="#ccc" strokeWidth=".5" /><path d="M14 11h5v6h-5z" fill="#3c9e8d" /><path d="M15 13h3v2h-3z" fill="#fff" /></g> },
  { art: <g><path d="M3 3h14l-2 16H5z" fill="#c9cbcd" opacity=".9" /><ellipse cx="10" cy="3.200" rx="7" ry="2" fill="#e4e5e6" /><path d="m6 7 3 3-2 3 3 3 3-3-2-3 3-3" fill="none" stroke="#f4f4f4" /></g> },
];

function Desktop() {
  return (
    <div className="flex h-[28px] shrink-0 bg-[repeating-linear-gradient(180deg,rgba(10,5,2,.35)_0px,rgba(10,5,2,0)_3px,rgba(10,5,2,.25)_5px,rgba(10,5,2,0)_9px),linear-gradient(90deg,#2c2421_0%,#453029_10%,#6a4839_19%,#4a3329_23%,#5a3a24_60%,#5a3d14_77%,#7b5a1e_83%,#4a3414_88%,#7a561d_94%,#5a4016_100%)]">
      <div className="ml-[296.500px] flex w-[655px] items-start rounded-t-[2px] border-t border-[#6b4a3c] bg-[linear-gradient(90deg,#8f6b62_0%,#a17158_25%,#b0723f_45%,#c07a35_60%,#b66a22_100%)] pt-[1.500px] pl-[1.500px]">
        {DOCK.map((d, i) => (
          <span key={i} className="flex shrink-0 flex-col items-start" style={{ width: d.w ?? 22.130 }}>
            <svg viewBox="0 0 20 20" className="ml-px h-[20px] w-[20px]">{d.art}</svg>
            <span className={"ml-[9.500px] h-[3px] w-[3px] rounded-full " + (d.run ? "bg-[#1a0f0a]" : "")} />
          </span>
        ))}
      </div>
    </div>
  );
}

export default function App() {
  return (
    <div className="flex h-[768px] w-[1366px] flex-col overflow-hidden bg-black">
      <TopBar />
      <div className="flex min-h-0 grow">
        <Launcher />
        <div className="flex min-w-0 grow flex-col">
          <WindowHeader />
          <div className="ml-[26px] flex w-[1247px] flex-col">
            <MenuBar />
            <TabStrip />
            <AddressBar />
            <Bookmarks />
            <AppNav />
            <Canvas />
            <Desktop />
          </div>
        </div>
      </div>
    </div>
  );
}
